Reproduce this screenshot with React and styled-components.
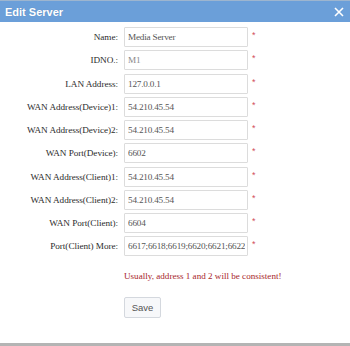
import React from 'react';
import styled, { createGlobalStyle } from 'styled-components';

const Global = createGlobalStyle`
  html, body {
    margin: 0;
    padding: 0;
    background: #fff;
  }
  body {
    font-family: "Liberation Serif", "Times New Roman", serif;
  }
`;

const Dialog = styled.div`
  width: 350px;
  height: 346px;
  box-sizing: border-box;
  border-top: 1px solid #9db5cf;
  border-bottom: 3px solid #b4b4b4;
  display: flex;
  flex-direction: column;
  background: #fff;
`;

const TitleBar = styled.div`
  height: 21px;
  background: #6b9fd9;
  display: flex;
  align-items: center;
  justify-content: space-between;
  padding: 0 6px 0 5px;
  color: #fff;
`;

const Title = styled.span`
  font-family: "Liberation Sans", Arial, sans-serif;
  font-weight: bold;
  font-size: 11px;
  text-shadow: 0 0 1px rgba(0, 0, 0, 0.15);
`;

const Close = styled.svg`
  width: 10px;
  height: 10px;
  display: block;
`;

const Form = styled.div`
  display: grid;
  grid-template-columns: 118px 124px auto;
  column-gap: 6px;
  row-gap: 3.25px;
  padding-top: 5px;
  align-items: center;
`;

const Label = styled.label`
  font-size: 9.2px;
  color: #2b2b2b;
  text-align: right;
  white-space: nowrap;
  letter-spacing: -0.05px;
`;

const Input = styled.input`
  box-sizing: border-box;
  width: 124px;
  height: 20px;
  border: 1px solid #dcdcdc;
  border-radius: 1px;
  padding: 0 2px 0 3px;
  font-family: "Liberation Serif", "Times New Roman", serif;
  font-size: 9.2px;
  letter-spacing: -0.2px;
  color: ${(p) => (p.$dim ? '#888' : '#555')};
  background: #fff;
  outline: none;
`;

const Star = styled.span`
  color: #d24c5c;
  font-family: "Liberation Sans", Arial, sans-serif;
  font-size: 9px;
  margin-left: -2px;
  margin-top: -4px;
`;

const Note = styled.div`
  grid-column: 2 / span 2;
  color: #a8262b;
  font-size: 9.1px;
  margin-top: 11px;
  white-space: nowrap;
`;

const Button = styled.button`
  grid-column: 2;
  justify-self: start;
  margin-top: 13px;
  width: 37px;
  height: 21px;
  border: 1px solid #d4d8de;
  border-radius: 2px;
  background: #f7f8fa;
  color: #555;
  font-family: Arial, "Liberation Sans", sans-serif;
  font-size: 9.5px;
  padding: 0;
`;

const rows = [
  ['Name:', 'Media Server'],
  ['IDNO.:', 'M1', true],
  ['LAN Address:', '127.0.0.1'],
  ['WAN Address(Device)1:', '54.210.45.54'],
  ['WAN Address(Device)2:', '54.210.45.54'],
  ['WAN Port(Device):', '6602'],
  ['WAN Address(Client)1:', '54.210.45.54'],
  ['WAN Address(Client)2:', '54.210.45.54'],
  ['WAN Port(Client):', '6604'],
  ['Port(Client) More:', '6617;6618;6619;6620;6621;6622'],
];

export default function App() {
  return (
    <>
      <Global />
      <Dialog>
        <TitleBar>
          <Title>Edit Server</Title>
          <Close viewBox="0 0 10 10">
            <path d="M1 1L9 9M9 1L1 9" stroke="#fff" strokeWidth="1.6" />
          </Close>
        </TitleBar>
        <Form>
          {rows.map(([label, value, dim]) => (
            <React.Fragment key={label}>
              <Label>{label}</Label>
              <Input defaultValue={value} $dim={dim} readOnly={dim} />
              <Star>*</Star>
            </React.Fragment>
          ))}
          <Note>Usually, address 1 and 2 will be consistent!</Note>
          <Button>Save</Button>
        </Form>
      </Dialog>
    </>
  );
}
